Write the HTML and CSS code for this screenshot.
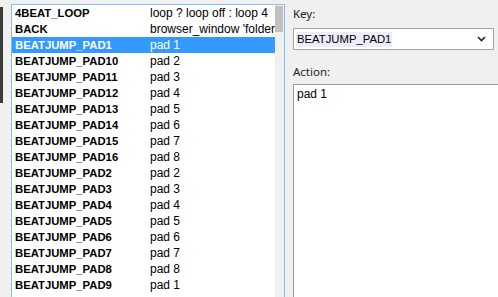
FILE: index.html
```html
<!DOCTYPE html>
<html lang="en">
<head>
    <meta charset="UTF-8">
    <title>Key Bindings</title>
    <link rel="stylesheet" href="styles.css">
</head>
<body>
    <div class="window">
        <div class="gutter"><div class="gutter-bar"></div></div>
        <div class="list-box">
            <div class="rows">
                <div class="row"><span class="key">4BEAT_LOOP</span><span class="val">loop ? loop off : loop 4</span></div>
                <div class="row"><span class="key">BACK</span><span class="val">browser_window 'folder'</span></div>
                <div class="row selected"><span class="key">BEATJUMP_PAD1</span><span class="val">pad 1</span></div>
                <div class="row"><span class="key">BEATJUMP_PAD10</span><span class="val">pad 2</span></div>
                <div class="row"><span class="key">BEATJUMP_PAD11</span><span class="val">pad 3</span></div>
                <div class="row"><span class="key">BEATJUMP_PAD12</span><span class="val">pad 4</span></div>
                <div class="row"><span class="key">BEATJUMP_PAD13</span><span class="val">pad 5</span></div>
                <div class="row"><span class="key">BEATJUMP_PAD14</span><span class="val">pad 6</span></div>
                <div class="row"><span class="key">BEATJUMP_PAD15</span><span class="val">pad 7</span></div>
                <div class="row"><span class="key">BEATJUMP_PAD16</span><span class="val">pad 8</span></div>
                <div class="row"><span class="key">BEATJUMP_PAD2</span><span class="val">pad 2</span></div>
                <div class="row"><span class="key">BEATJUMP_PAD3</span><span class="val">pad 3</span></div>
                <div class="row"><span class="key">BEATJUMP_PAD4</span><span class="val">pad 4</span></div>
                <div class="row"><span class="key">BEATJUMP_PAD5</span><span class="val">pad 5</span></div>
                <div class="row"><span class="key">BEATJUMP_PAD6</span><span class="val">pad 6</span></div>
                <div class="row"><span class="key">BEATJUMP_PAD7</span><span class="val">pad 7</span></div>
                <div class="row"><span class="key">BEATJUMP_PAD8</span><span class="val">pad 8</span></div>
                <div class="row"><span class="key">BEATJUMP_PAD9</span><span class="val">pad 1</span></div>
            </div>
            <div class="scrollbar"><div class="thumb"></div></div>
        </div>
        <div class="editor">
            <div class="label">Key:</div>
            <div class="combo">
                <span class="combo-text">BEATJUMP_PAD1</span>
                <svg class="chevron" width="9" height="6" viewBox="0 0 9 6">
                    <path d="M1 1 L4.5 4.5 L8 1" fill="none" stroke="#222" stroke-width="1.6"/>
                </svg>
            </div>
            <div class="label action-label">Action:</div>
            <div class="action">pad 1</div>
        </div>
    </div>
</body>
</html>
```

FILE: styles.css
```css
body {
    margin: 0;
    background: #f0f0f0;
    font-family: "Liberation Sans", Arial, sans-serif;
    font-size: 12px;
    color: #000;
    overflow: hidden;
}
.window {
    display: flex;
    height: 297px;
}
.gutter {
    width: 11px;
    flex: none;
}
.gutter-bar {
    width: 3px;
    height: 96px;
    margin-top: 7px;
    background: #3c3c3c;
}
.list-box {
    display: flex;
    width: 272px;
    margin-top: 4px;
    border: 1px solid #86bff2;
    border-bottom: none;
    background: #fff;
    flex: none;
}
.rows {
    width: 263px;
}
.row {
    display: flex;
    height: 16px;
    line-height: 16px;
    white-space: nowrap;
    overflow: hidden;
}
.row.selected {
    background: #3399ff;
    color: #fff;
}
.key {
    width: 135px;
    padding-left: 3px;
    font-weight: bold;
    font-size: 11.3px;
    flex: none;
}
.val {
    overflow: hidden;
}
.scrollbar {
    width: 9px;
    background: #f0f0f0;
    padding-top: 1px;
}
.thumb {
    width: 8px;
    height: 26px;
    background: #c1c1c1;
}
.editor {
    flex: 1;
    padding-left: 8px;
    padding-top: 5px;
    display: flex;
    flex-direction: column;
}
.label {
    font-family: "Noto Sans", "Open Sans", sans-serif;
    font-size: 11.5px;
    height: 18px;
    line-height: 18px;
    color: #222;
}
.combo {
    display: flex;
    align-items: center;
    justify-content: space-between;
    width: 197px;
    height: 20px;
    margin-top: 5px;
    border: 1px solid #a6a6a6;
    background: #fff;
    padding-left: 2px;
}
.combo-text {
    font-size: 11.3px;
    line-height: 15px;
    padding: 0 1px;
    background: #ececfa;
}
.chevron {
    margin-right: 7px;
}
.action-label {
    margin-top: 13px;
}
.action {
    flex: 1;
    margin-top: 3px;
    border-left: 1px solid #9a9a9a;
    border-top: 1px solid #9a9a9a;
    background: #fff;
    padding: 2px 0 0 3px;
    line-height: 14px;
}
```
